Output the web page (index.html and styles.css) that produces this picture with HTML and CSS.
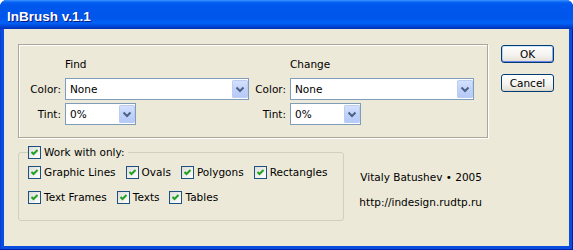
FILE: index.html
```html
<!DOCTYPE html>
<html lang="en">

<head>
    <meta charset="UTF-8">
    <title>InBrush v.1.1</title>
    <link rel="stylesheet" href="styles.css">
</head>

<body>
    <div class="window">
        <div class="titlebar">InBrush v.1.1</div>
        <div class="client">
            <div class="main">
                <div class="panel">
                    <div class="grid">
                        <span></span>
                        <span class="head">Find</span>
                        <span></span>
                        <span class="head">Change</span>

                        <label>Color:</label>
                        <div class="combo"><span class="value">None</span><span class="arrow"><svg width="16" height="18" viewBox="0 0 16 18"><path d="M4.5 7.5 L8 11 L11.5 7.5" fill="none" stroke="#4d6185" stroke-width="2"/></svg></span></div>
                        <label>Color:</label>
                        <div class="combo"><span class="value">None</span><span class="arrow"><svg width="16" height="18" viewBox="0 0 16 18"><path d="M4.5 7.5 L8 11 L11.5 7.5" fill="none" stroke="#4d6185" stroke-width="2"/></svg></span></div>

                        <label>Tint:</label>
                        <div class="combo short"><span class="value">0%</span><span class="arrow"><svg width="16" height="18" viewBox="0 0 16 18"><path d="M4.5 7.5 L8 11 L11.5 7.5" fill="none" stroke="#4d6185" stroke-width="2"/></svg></span></div>
                        <label>Tint:</label>
                        <div class="combo short"><span class="value">0%</span><span class="arrow"><svg width="16" height="18" viewBox="0 0 16 18"><path d="M4.5 7.5 L8 11 L11.5 7.5" fill="none" stroke="#4d6185" stroke-width="2"/></svg></span></div>
                    </div>
                </div>

                <div class="lower">
                    <fieldset class="group">
                        <legend><span class="check"><span class="box"><svg width="11" height="11" viewBox="0 0 11 11"><path d="M2.5 5 L4.5 7 L8.5 3" fill="none" stroke="#21a121" stroke-width="2"/></svg></span>Work with only:</span></legend>
                        <div class="row">
                            <span class="check"><span class="box"><svg width="11" height="11" viewBox="0 0 11 11"><path d="M2.5 5 L4.5 7 L8.5 3" fill="none" stroke="#21a121" stroke-width="2"/></svg></span>Graphic Lines</span>
                            <span class="check"><span class="box"><svg width="11" height="11" viewBox="0 0 11 11"><path d="M2.5 5 L4.5 7 L8.5 3" fill="none" stroke="#21a121" stroke-width="2"/></svg></span>Ovals</span>
                            <span class="check"><span class="box"><svg width="11" height="11" viewBox="0 0 11 11"><path d="M2.5 5 L4.5 7 L8.5 3" fill="none" stroke="#21a121" stroke-width="2"/></svg></span>Polygons</span>
                            <span class="check"><span class="box"><svg width="11" height="11" viewBox="0 0 11 11"><path d="M2.5 5 L4.5 7 L8.5 3" fill="none" stroke="#21a121" stroke-width="2"/></svg></span>Rectangles</span>
                        </div>
                        <div class="row">
                            <span class="check"><span class="box"><svg width="11" height="11" viewBox="0 0 11 11"><path d="M2.5 5 L4.5 7 L8.5 3" fill="none" stroke="#21a121" stroke-width="2"/></svg></span>Text Frames</span>
                            <span class="check"><span class="box"><svg width="11" height="11" viewBox="0 0 11 11"><path d="M2.5 5 L4.5 7 L8.5 3" fill="none" stroke="#21a121" stroke-width="2"/></svg></span>Texts</span>
                            <span class="check"><span class="box"><svg width="11" height="11" viewBox="0 0 11 11"><path d="M2.5 5 L4.5 7 L8.5 3" fill="none" stroke="#21a121" stroke-width="2"/></svg></span>Tables</span>
                        </div>
                    </fieldset>
                    <div class="credits">
                        <p>Vitaly Batushev &bull; 2005</p>
                        <p class="url">http://indesign.rudtp.ru</p>
                    </div>
                </div>
            </div>

            <div class="buttons">
                <button class="btn default">OK</button>
                <button class="btn">Cancel</button>
            </div>
        </div>
    </div>
</body>

</html>
```

FILE: styles.css
```css
* {
    margin: 0;
    padding: 0;
    box-sizing: border-box;
}

body {
    background: #fff;
    font-family: "DejaVu Sans", sans-serif;
    font-size: 10.5px;
    color: #000;
}

.window {
    width: 573px;
    height: 250px;
    border-radius: 7px 7px 0 0;
    background: #0a4ce0;
    box-shadow: inset -1px -1px 0 #0020a8, inset 1px 0 0 #0a3fd0;
    display: flex;
    flex-direction: column;
    overflow: hidden;
}

.titlebar {
    height: 29px;
    padding: 4px 0 0 7px;
    line-height: 25px;
    font-family: "Liberation Sans", sans-serif;
    font-weight: bold;
    font-size: 13.5px;
    color: #fff;
    text-shadow: 1px 1px 0 #0a1883;
    background: linear-gradient(to bottom, #3d95ff 0, #0a66f5 2px, #0058ee 4px, #0055ea 18px, #0062f7 23px, #0048da 26px, #0031b4 29px);
}

.client {
    flex: 1;
    margin: 0 4px 4px 4px;
    background: #ece9d8;
    display: flex;
    padding: 15px 15px 0 14px;
}

.main {
    width: 470px;
}

.panel {
    height: 94px;
    border: 1px solid #aca899;
    box-shadow: 1px 1px 0 #fff, inset 1px 1px 0 #fff;
    padding-top: 13px;
}

.grid {
    display: grid;
    grid-template-columns: 42px 184px 33px 184px;
    column-gap: 4px;
    row-gap: 3px;
}

.grid .head {
    line-height: 13px;
    margin-bottom: 4px;
}

.grid label {
    text-align: right;
    align-self: center;
}

.combo {
    display: flex;
    height: 22px;
    border: 1px solid #7f9db9;
    background: #fff;
    padding: 1px 0 1px 1px;
}

.combo.short {
    width: 71px;
}

.combo .value {
    flex: 1;
    padding-left: 3px;
    line-height: 18px;
}

.combo .arrow {
    width: 16px;
    border-radius: 2px;
    background: linear-gradient(to bottom, #d7e3fd, #c1d3fb 50%, #b4c8f6);
    box-shadow: inset 0 0 0 1px #bccdf3;
}

.combo .arrow svg {
    display: block;
}

.lower {
    display: flex;
    margin-top: 7px;
}

.group {
    width: 326px;
    border: 1px solid #d0d0bf;
    border-radius: 3px;
    padding: 5px 9px 15px;
}

.group legend {
    padding: 0 3px 0 0;
}

.check {
    display: flex;
    align-items: center;
    gap: 3px;
    height: 15px;
    line-height: 15px;
    white-space: nowrap;
}

.box {
    width: 13px;
    height: 13px;
    border: 1px solid #1c5180;
    background: linear-gradient(135deg, #dcdcd7, #fff);
}

.box svg {
    display: block;
}

.row {
    display: flex;
    gap: 10px;
}

.row + .row {
    margin-top: 10px;
}

.credits {
    flex: 1;
    text-align: right;
    padding: 25px 6px 0 0;
    line-height: 15px;
}

.credits .url {
    margin-top: 10px;
}

.buttons {
    margin-left: auto;
    width: 53px;
    padding-top: 1px;
}

.btn {
    display: block;
    width: 53px;
    height: 18px;
    border: 1px solid #003c74;
    border-radius: 3px;
    background: linear-gradient(to bottom, #fff, #f3f2ee 60%, #e6e3d9 90%, #d6d0c5);
    font-family: "DejaVu Sans", sans-serif;
    font-size: 10.5px;
    color: #000;
    line-height: 16px;
}

.btn.default {
    box-shadow: inset 0 1px 0 #cee7ff, inset 0 -1px 0 #6982ee, inset 1px 0 0 #b8d0fb, inset -1px 0 0 #8fa9f3;
}

.btn + .btn {
    margin-top: 11px;
}
```
